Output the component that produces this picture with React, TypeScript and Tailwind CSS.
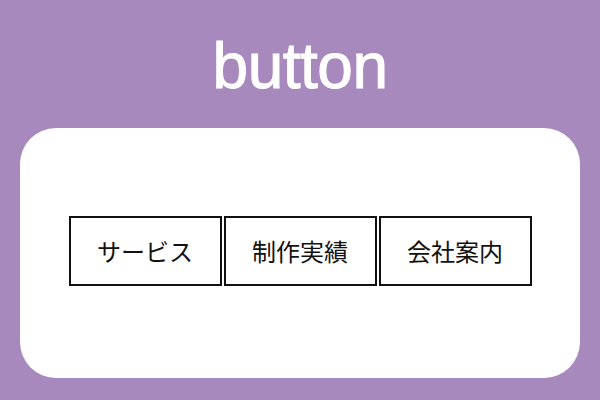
const NAV = ['サービス', '制作実績', '会社案内'];

export default function App() {
  return (
    <div className="w-[600px] h-[400px] bg-[#a889be] flex flex-col px-5 pb-[22px]">
      <div className="h-[128px] flex items-center justify-center pt-[4px]">
        <h1 className="text-white text-[64px] leading-none tracking-[-0.5px] [-webkit-text-stroke:1px_white] font-['Liberation_Sans',sans-serif]">
          button
        </h1>
      </div>
      <div className="flex-1 bg-white rounded-[36px] flex items-center justify-center pb-[4px]">
        <nav className="flex gap-[2px]">
          {NAV.map((label) => (
            <a
              key={label}
              href="#"
              className="w-[153px] h-[70px] border-2 border-[#111] flex items-center justify-center text-[24px] text-[#111] font-['Noto_Sans_CJK_JP',sans-serif]"
            >
              {label}
            </a>
          ))}
        </nav>
      </div>
    </div>
  );
}
